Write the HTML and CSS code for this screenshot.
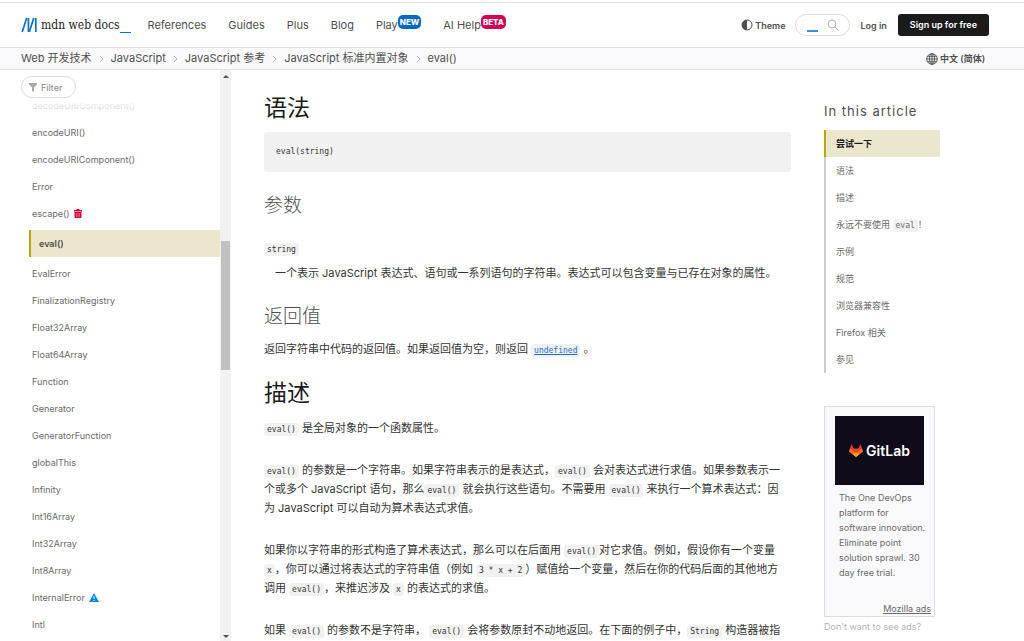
FILE: index.html
```html
<!DOCTYPE html>
<html lang="zh-CN">
<head>
<meta charset="utf-8">
<title>eval() - JavaScript | MDN</title>
<link rel="stylesheet" href="styles.css">
</head>
<body>
<header class="top">
  <a class="logo" href="#">
    <svg class="logo-mark" viewBox="0 0 17 16" aria-hidden="true"><g stroke="#0a6fd0" stroke-width="1.700" fill="none"><path d="M1.200 15 5.700 1M8.300 15 12.800 1"/><path d="M7.400 1v14M14.800 1v14"/></g></svg>
    <span class="logo-text">mdn web docs</span><span class="logo-bar"></span>
  </a>
  <nav class="nav">
    <a href="#">References</a>
    <a href="#">Guides</a>
    <a href="#">Plus</a>
    <a href="#">Blog</a>
    <a href="#">Play<span class="badge badge-new">NEW</span></a>
    <a href="#">AI Help<span class="badge badge-beta">BETA</span></a>
  </nav>
  <div class="tools">
    <button class="theme" type="button"><svg viewBox="0 0 12 12" aria-hidden="true"><circle cx="6" cy="6" r="5" fill="none" stroke="#4e4e4e"/><path d="M6 1a5 5 0 0 0 0 10z" fill="#4e4e4e"/></svg>Theme</button>
    <div class="search">
      <input type="text" aria-label="Search">
      <span class="search-caret"></span>
      <svg viewBox="0 0 12 12" aria-hidden="true"><circle cx="5" cy="5" r="4" fill="none" stroke="#b3b3b3"/><path d="m8 8 3.500 3.500" stroke="#b3b3b3"/></svg>
    </div>
    <a class="login" href="#">Log in</a>
    <a class="signup" href="#">Sign up for free</a>
  </div>
</header>
<div class="crumbs">
  <nav class="trail">
    <a href="#">Web 开发技术</a><svg viewBox="0 0 5 8" aria-hidden="true"><path d="m1 1 3 3-3 3"/></svg>
    <a href="#">JavaScript</a><svg viewBox="0 0 5 8" aria-hidden="true"><path d="m1 1 3 3-3 3"/></svg>
    <a href="#">JavaScript 参考</a><svg viewBox="0 0 5 8" aria-hidden="true"><path d="m1 1 3 3-3 3"/></svg>
    <a href="#">JavaScript 标准内置对象</a><svg viewBox="0 0 5 8" aria-hidden="true"><path d="m1 1 3 3-3 3"/></svg>
    <a href="#">eval()</a>
  </nav>
  <button class="lang" type="button"><svg viewBox="0 0 12 12" aria-hidden="true"><g fill="none" stroke="#4e4e4e" stroke-width=".9"><circle cx="6" cy="6" r="5.300"/><ellipse cx="6" cy="6" rx="2.500" ry="5.300"/><path d="M6 .7v10.600M.7 6h10.600M1.500 3.300h9M1.500 8.700h9"/></g></svg>中文 (简体)</button>
</div>
<div class="layout">
  <aside class="sidebar">
    <div class="filter-bar">
      <button class="filter" type="button"><svg viewBox="0 0 8 9" aria-hidden="true"><path d="M0 0h8v1.500L5 4.500V9L3 8V4.500L0 1.500z" fill="#aaa"/></svg>Filter</button>
    </div>
    <ul class="items">
      <li><a href="#">decodeURIComponent()</a></li>
      <li><a href="#">encodeURI()</a></li>
      <li><a href="#">encodeURIComponent()</a></li>
      <li><a href="#">Error</a></li>
      <li><a href="#">escape()</a><svg class="trash" viewBox="0 0 8 9" aria-hidden="true"><path d="M0 1h2.500V0h3v1H8v1.500H0zM.5 3h7v5q0 1-1 1h-5q-1 0-1-1z" fill="#d30038"/><path d="M2.500 4v4M4 4v4M5.500 4v4" stroke="#f08ba5" stroke-width=".6"/></svg></li>
      <li class="current"><a href="#" aria-current="page">eval()</a></li>
      <li><a href="#">EvalError</a></li>
      <li><a href="#">FinalizationRegistry</a></li>
      <li><a href="#">Float32Array</a></li>
      <li><a href="#">Float64Array</a></li>
      <li><a href="#">Function</a></li>
      <li><a href="#">Generator</a></li>
      <li><a href="#">GeneratorFunction</a></li>
      <li><a href="#">globalThis</a></li>
      <li><a href="#">Infinity</a></li>
      <li><a href="#">Int16Array</a></li>
      <li><a href="#">Int32Array</a></li>
      <li><a href="#">Int8Array</a></li>
      <li><a href="#">InternalError</a><svg class="warn" viewBox="0 0 10 9" aria-hidden="true"><path d="M5 0l5 9H0z" fill="#0085f2"/><path d="M5 3v3M5 7v1" stroke="#fff"/></svg></li>
      <li><a href="#">Intl</a></li>
    </ul>
    <div class="scroll" aria-hidden="true"><span class="arrow-up"></span><span class="thumb"></span><span class="arrow-down"></span></div>
  </aside>
  <main class="article">
    <h2>语法</h2>
    <pre>eval(string)</pre>
    <h3>参数</h3>
    <dl>
      <dt><code>string</code></dt>
      <dd>一个表示 JavaScript 表达式、语句或一系列语句的字符串。表达式可以包含变量与已存在对象的属性。</dd>
    </dl>
    <h3>返回值</h3>
    <p>返回字符串中代码的返回值。如果返回值为空，则返回 <a href="#"><code>undefined</code></a> 。</p>
    <h2>描述</h2>
    <p><code>eval()</code> 是全局对象的一个函数属性。</p>
    <p><code>eval()</code> 的参数是一个字符串。如果字符串表示的是表达式，<code>eval()</code> 会对表达式进行求值。如果参数表示一个或多个 JavaScript 语句，那么<code>eval()</code> 就会执行这些语句。不需要用 <code>eval()</code> 来执行一个算术表达式：因为 JavaScript 可以自动为算术表达式求值。</p>
    <p>如果你以字符串的形式构造了算术表达式，那么可以在后面用 <code>eval()</code>对它求值。例如，假设你有一个变量 <code>x</code>，你可以通过将表达式的字符串值（例如 <code>3 * x + 2</code>）赋值给一个变量，然后在你的代码后面的其他地方调用 <code>eval()</code>，来推迟涉及 <code>x</code> 的表达式的求值。</p>
    <p>如果 <code>eval()</code> 的参数不是字符串， <code>eval()</code> 会将参数原封不动地返回。在下面的例子中，<code>String</code> 构造器被指</p>
  </main>
  <aside class="side">
    <h2 class="toc-title">In this article</h2>
    <ul class="toc">
      <li class="active"><a href="#">尝试一下</a></li>
      <li><a href="#">语法</a></li>
      <li><a href="#">描述</a></li>
      <li><a href="#">永远不要使用 <code>eval</code>！</a></li>
      <li><a href="#">示例</a></li>
      <li><a href="#">规范</a></li>
      <li><a href="#">浏览器兼容性</a></li>
      <li><a href="#">Firefox 相关</a></li>
      <li><a href="#">参见</a></li>
    </ul>
    <section class="ad">
      <div class="ad-art"><svg viewBox="0 0 14 13" aria-hidden="true"><path d="M2.500 0 4.500 4.500h5L11.500 0 14 7.500 7 13 0 7.500z" fill="#e24329"/><path d="M0 7.500 1 5l6 4 6-4 1 2.500L7 13z" fill="#fc6d26"/><path d="M4 10.500 7 8.500l3 2L7 13z" fill="#fca326"/></svg>GitLab</div>
      <p>The One DevOps platform for software innovation. Eliminate point solution sprawl. 30 day free trial.</p>
      <a class="ad-link" href="#">Mozilla ads</a>
    </section>
    <a class="no-ads" href="#">Don't want to see ads?</a>
  </aside>
</div>
</body>
</html>
```
FILE: styles.css
```css
* { box-sizing: border-box; }
body {
  margin: 0;
  height: 100vh;
  display: flex;
  flex-direction: column;
  overflow: hidden;
  background: #fff;
  color: #333;
  font: 11px/19px Inter, "Noto Sans CJK SC", sans-serif;
}
a { color: inherit; text-decoration: none; }
button { border: 0; padding: 0; background: none; font: inherit; color: inherit; }
ul, dl, dd, p, h2, h3, pre { margin: 0; padding: 0; }
ul { list-style: none; }

.top {
  display: flex;
  align-items: center;
  flex: none;
  height: 46px;
  margin-top: 2px;
  padding: 0 35px 0 21px;
  border-top: 1px solid #dcdcdc;
  border-bottom: 1px solid #dcdcdc;
}
.logo { display: flex; align-items: center; margin-right: 16px; }
.logo-mark { width: 17px; height: 16px; margin-right: 3px; }
.logo-text { font: 12px/16px "DejaVu Serif Condensed", "DejaVu Serif", serif; color: #1b1b1b; }
.logo-bar { align-self: flex-end; width: 11px; height: 1px; margin-left: 1px; background: #0a6fd0; }
.nav { display: flex; gap: 22px; color: #4e4e4e; }
.nav a { display: flex; }
.badge {
  align-self: flex-start;
  padding: 0 2px;
  border-radius: 5px;
  color: #fff;
  font-size: 8px;
  font-weight: 800;
  line-height: 14px;
  margin-top: -1px;
}
.badge-new { background: #0069c2; }
.badge-beta { background: #d30058; }
.tools { display: flex; align-items: center; margin-left: auto; color: #4e4e4e; font-size: 9px; font-weight: 600; }
.theme { display: flex; align-items: center; gap: 2px; }
.theme svg { width: 12px; height: 12px; }
.search {
  display: flex;
  align-items: center;
  width: 55px;
  height: 22px;
  margin: 0 11px 0 9px;
  padding: 0 10px 0 11px;
  border: 1px solid #dcdcdc;
  border-radius: 11px;
}
.search input { width: 0; height: 16px; padding: 0; border: 0; outline: 0; }
.search-caret { width: 11px; height: 2px; margin: 11px auto 0 0; background: #3a8fdd; }
.search svg { width: 12px; height: 12px; }
.signup { margin-left: 11px; padding: 0 12px; border-radius: 3px; background: #1b1b1b; color: #fff; line-height: 22px; }

.crumbs {
  display: flex;
  align-items: center;
  justify-content: space-between;
  flex: none;
  height: 22px;
  padding: 0 39px 0 21px;
  border-bottom: 1px solid #e0e0e0;
  background: #f9f9fb;
  color: #4e4e4e;
}
.trail { display: flex; align-items: center; gap: 7px; }
.trail svg { width: 5px; height: 8px; fill: none; stroke: #b3b3b3; }
.lang { display: flex; align-items: center; gap: 2px; font-size: 9px; font-weight: 600; }
.lang svg { width: 12px; height: 12px; }

.layout {
  display: grid;
  grid-template-columns: 210px minmax(0, 1fr) 165px;
  gap: 33px;
  flex: 1;
  min-height: 0;
  padding: 0 35px 0 21px;
}
.sidebar { position: relative; display: flex; min-height: 0; font-size: 9px; color: #696969; }
.filter-bar {
  position: absolute;
  inset: 0 11px auto 0;
  height: 50px;
  padding-top: 6px;
  background: linear-gradient(#fff 60%, #fff6);
}
.filter {
  display: flex;
  align-items: center;
  gap: 4px;
  height: 22px;
  padding: 0 13px 0 7px;
  border: 1px solid #dcdcdc;
  border-radius: 11px;
  color: #858585;
}
.filter svg { width: 8px; height: 9px; }
.items { flex: 1; padding: 22px 0 0 8px; overflow: hidden; }
.items li { display: flex; align-items: center; gap: 4px; height: 27px; padding-left: 3px; }
.items .current { margin: 3px 0; padding-left: 8px; border-left: 2px solid #b5a800; background: #ebe7cd; color: #4e4e4e; font-weight: 600; }
.trash { width: 8px; height: 9px; }
.warn { width: 10px; height: 9px; }
.scroll { display: flex; flex-direction: column; align-items: center; flex: none; width: 11px; padding: 5px 0 3px; background: #f1f1f1; }
.arrow-up, .arrow-down { border: 3px solid transparent; }
.arrow-up { border-top: 0; border-bottom-color: #505050; }
.arrow-down { border-bottom: 0; border-top-color: #505050; margin-top: auto; }
.thumb { width: 9px; height: 129px; margin-top: 163px; background: #c1c1c1; }

.article { padding-top: 23px; overflow: hidden; }
.article h2 { color: #1b1b1b; font-size: 23px; font-weight: 400; line-height: 30px; }
.article h3 { margin-top: 21px; color: #4e4e4e; font-size: 19px; font-weight: 300; line-height: 26px; }
pre, code { font-family: "DejaVu Sans Mono", monospace; font-size: 8px; }
pre { padding: 10px 12px; border-radius: 3px; background: #f1f1f1; line-height: 20px; }
.article pre { margin-top: 9px; }
code { padding: 2px 3px; border-radius: 3px; background: #f1f1f1; line-height: 1; }
dl { margin-top: 20px; }
dd { margin-top: 6px; padding-left: 11px; }
.article p { padding-right: 8px; }
.article h3 + p { margin-top: 10px; }
.article p + h2 { margin-top: 19px; }
.article h2 + p { margin-top: 11px; }
.article p + p { margin-top: 23px; }
.article a { color: #1870c8; text-decoration: underline; }
.article a code { color: inherit; }

.side { padding-top: 31px; overflow: hidden; color: #696969; font-size: 9px; }
.toc-title { margin-bottom: 9px; color: #4e4e4e; font-size: 13px; font-weight: 400; line-height: 20px; letter-spacing: 1px; }
.toc { width: 116px; }
.toc li { height: 27px; padding-left: 10px; border-left: 2px solid #cdcdcd; line-height: 27px; white-space: nowrap; }
.toc .active { border-color: #b5a800; background: #ebe7cd; color: #1b1b1b; font-weight: 600; }
.ad { width: 111px; margin-top: 33px; padding: 9px 3px 0 10px; border: 1px solid #dcdcdc; background: #f9f9fb; }
.ad-art {
  display: flex;
  align-items: center;
  justify-content: center;
  gap: 3px;
  height: 69px;
  margin-right: 7px;
  background: #100b1b;
  color: #fff;
  font-size: 14px;
  font-weight: 600;
}
.ad-art svg { width: 14px; height: 13px; }
.ad p { padding: 5px 4px 0 4px; line-height: 15px; }
.ad-link { display: block; margin-top: 21px; line-height: 15px; text-align: right; text-decoration: underline; }
.no-ads { color: #b3b3b3; }
```
